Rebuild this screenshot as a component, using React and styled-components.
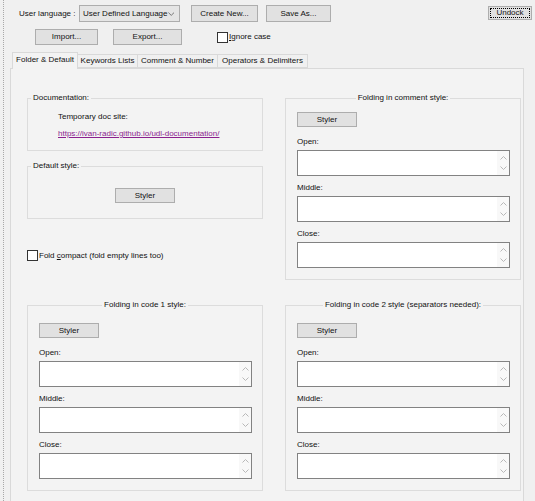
import React from 'react'
import styled, { createGlobalStyle } from 'styled-components'

const GlobalStyle = createGlobalStyle`
  html, body {
    margin: 0;
    padding: 0;
    background: #f0f0f0;
  }
  body {
    font-family: "Liberation Sans", Arial, sans-serif;
    font-size: 8px;
    line-height: 10px;
    color: #111;
  }
`

const Frame = styled.div`
  margin-left: 3px;
  border-left: 1px dotted #a8a8a8;
  height: 501px;
  box-sizing: border-box;
  overflow: hidden;
`

const TopRow = styled.div`
  display: flex;
  align-items: center;
  height: 17px;
  padding: 5px 3px 0 15px;
`

const Label = styled.span`
  width: 60px;
  white-space: nowrap;
`

const Combo = styled.div`
  width: 101px;
  height: 17px;
  box-sizing: border-box;
  border: 1px solid #adadad;
  background: #e5e5e5;
  display: flex;
  align-items: center;
  justify-content: space-between;
  padding: 0 5px 0 3px;
  white-space: nowrap;
`

const Button = styled.div`
  width: ${p => p.$w}px;
  height: ${p => p.$h || 17}px;
  margin-left: ${p => p.$ml || 0}px;
  box-sizing: border-box;
  border: 1px solid #adadad;
  background: #e1e1e1;
  display: flex;
  align-items: center;
  justify-content: center;
  white-space: nowrap;
  flex-shrink: 0;
`

const UndockButton = styled(Button)`
  margin-left: auto;
  align-self: flex-start;
  margin-top: 1px;
  outline: 1px dotted #000;
  outline-offset: -3px;
`

const SecondRow = styled.div`
  display: flex;
  align-items: center;
  height: 16px;
  margin-top: 7px;
  padding-left: 31px;
`

const Check = styled.label`
  display: flex;
  align-items: center;
  margin-left: ${p => p.$ml || 0}px;
  white-space: nowrap;
`

const CheckBox = styled.span`
  width: 11px;
  height: 11px;
  box-sizing: border-box;
  border: 1px solid #333;
  background: #fff;
  margin-right: 1px;
`

const TabStrip = styled.div`
  display: flex;
  align-items: flex-end;
  height: 16px;
  margin-top: 7px;
  padding-left: 8px;
`

const Tab = styled.div`
  position: relative;
  z-index: ${p => (p.$active ? 1 : 0)};
  width: ${p => p.$w}px;
  height: ${p => (p.$active ? 17 : 14)}px;
  margin-bottom: ${p => (p.$active ? -1 : 0)}px;
  box-sizing: border-box;
  border: 1px solid #d9d9d9;
  border-bottom: ${p => (p.$active ? 'none' : '1px solid #d9d9d9')};
  border-left: ${p => (p.$first || p.$active ? '1px solid #d9d9d9' : 'none')};
  background: ${p => (p.$active ? '#f3f3f3' : '#f0f0f0')};
  display: flex;
  align-items: center;
  justify-content: center;
  white-space: nowrap;
  padding-bottom: ${p => (p.$active ? 2 : 0)}px;
`

const Panel = styled.div`
  margin-left: 6px;
  width: 514px;
  height: 440px;
  box-sizing: border-box;
  border: 1px solid #d9d9d9;
  background: #f3f3f3;
  padding: 24px 0 0 16px;
  display: grid;
  grid-template-columns: 236px 236px;
  column-gap: 22px;
  row-gap: 20px;
  align-items: start;
  align-content: start;
`

const Column = styled.div`
  display: flex;
  flex-direction: column;
`

const Group = styled.fieldset`
  margin: 0;
  margin-top: ${p => p.$mt || 0}px;
  padding: 0;
  min-width: 0;
  border: 1px solid #dcdcdc;
`

const Title = styled.legend`
  padding: 0 2px;
  line-height: 10px;
  margin-left: ${p => (p.$center ? 'auto' : '3px')};
  margin-right: ${p => (p.$center ? 'auto' : '0')};
  white-space: nowrap;
`

const Body = styled.div`
  padding: ${p => p.$pad};
  display: flex;
  flex-direction: column;
  align-items: ${p => (p.$center ? 'center' : 'stretch')};
`

const DocLink = styled.a`
  margin-top: 7px;
  color: #8b1f8e;
  text-decoration: underline;
  white-space: nowrap;
`

const StylerButton = styled(Button)`
  height: 15px;
  margin-bottom: ${p => p.$mb || 0}px;
`

const Fields = styled.div`
  display: flex;
  flex-direction: column;
  gap: 7px;
`

const FieldLabel = styled.div`
  height: 10px;
  margin-bottom: 3px;
`

const EditBox = styled.div`
  height: 26px;
  box-sizing: border-box;
  border: 1px solid #828282;
  background: #fff;
  display: flex;
  justify-content: flex-end;
`

const ScrollColumn = styled.div`
  width: 12px;
  background: #f8f8f8;
  display: flex;
  flex-direction: column;
  justify-content: space-between;
  align-items: center;
  padding: 5px 0;
`

const FoldRow = styled(Check)`
  margin-top: 31px;
  height: 11px;
`

const Chevron = ({ up, color = '#b8b8b8' }) => (
  <svg width="7" height="4" viewBox="0 0 7 4">
    <path
      d={up ? 'M0.5 3.5 L3.5 0.5 L6.5 3.5' : 'M0.5 0.5 L3.5 3.5 L6.5 0.5'}
      fill="none"
      stroke={color}
      strokeWidth="1"
    />
  </svg>
)

const Edit = () => (
  <EditBox>
    <ScrollColumn>
      <Chevron up />
      <Chevron />
    </ScrollColumn>
  </EditBox>
)

const FoldGroup = ({ title, top }) => (
  <Group>
    <Title $center>{title}</Title>
    <Body $pad={`${top}px 10px 11px 11px`}>
      <StylerButton $w={60} $mb={10}>Styler</StylerButton>
      <Fields>
        {['Open:', 'Middle:', 'Close:'].map(name => (
          <div key={name}>
            <FieldLabel>{name}</FieldLabel>
            <Edit />
          </div>
        ))}
      </Fields>
    </Body>
  </Group>
)

const tabs = [
  { name: 'Folder & Default', w: 66 },
  { name: 'Keywords Lists', w: 60 },
  { name: 'Comment & Number', w: 80 },
  { name: 'Operators & Delimiters', w: 90 },
]

export default function App() {
  return (
    <>
      <GlobalStyle />
      <Frame>
        <TopRow>
          <Label>User language :</Label>
          <Combo>
            <span>User Defined Language</span>
            <Chevron color="#6d6d6d" />
          </Combo>
          <Button $w={67} $ml={11}>Create New...</Button>
          <Button $w={65} $ml={8}>Save As...</Button>
          <UndockButton $w={44} $h={14}>Undock</UndockButton>
        </TopRow>

        <SecondRow>
          <Button $w={63} $h={16}>Import...</Button>
          <Button $w={69} $h={16} $ml={15}>Export...</Button>
          <Check $ml={35}>
            <CheckBox />
            <span><u>I</u>gnore case</span>
          </Check>
        </SecondRow>

        <TabStrip>
          {tabs.map((t, i) => (
            <Tab key={t.name} $w={t.w} $active={i === 0} $first={i === 0}>
              {t.name}
            </Tab>
          ))}
        </TabStrip>

        <Panel>
          <Column>
            <Group>
              <Title>Documentation:</Title>
              <Body $pad="9px 10px 11px 30px">
                <span>Temporary doc site:</span>
                <DocLink href="#">https://ivan-radic.github.io/udl-documentation/</DocLink>
              </Body>
            </Group>
            <Group $mt={10}>
              <Title>Default style:</Title>
              <Body $pad="17px 0 15px" $center>
                <StylerButton $w={60}>Styler</StylerButton>
              </Body>
            </Group>
            <FoldRow>
              <CheckBox />
              <span>Fold <u>c</u>ompact (fold empty lines too)</span>
            </FoldRow>
          </Column>

          <FoldGroup title="Folding in comment style:" top={9} />
          <FoldGroup title="Folding in code 1 style:" top={13} />
          <FoldGroup title="Folding in code 2 style (separators needed):" top={13} />
        </Panel>
      </Frame>
    </>
  )
}
